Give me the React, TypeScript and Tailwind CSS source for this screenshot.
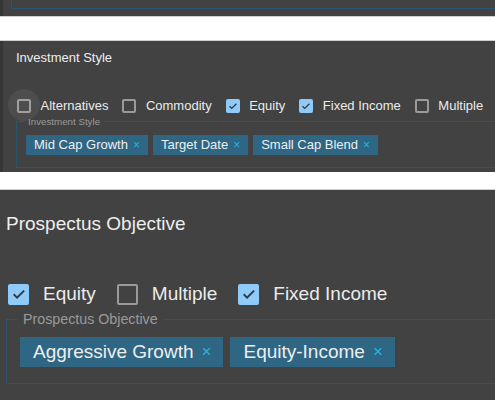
import React from "react";

const font = { fontFamily: "'Liberation Sans', Arial, sans-serif" };

function Check({ checked, size }: { checked: boolean; size: number }) {
  if (checked) {
    return (
      <span
        className="flex shrink-0 items-center justify-center rounded-[2px] bg-[#90caf9]"
        style={{ width: size, height: size }}
      >
        <svg viewBox="0 0 24 24" width={size * 0.85} height={size * 0.85}>
          <path d="M5 12.5l4.5 4.5L19 7.5" fill="none" stroke="#2f3a44" strokeWidth="2.6" />
        </svg>
      </span>
    );
  }
  return (
    <span
      className="block shrink-0 box-border rounded-[2px] border-2 border-[#9a9a9a]"
      style={{ width: size, height: size }}
    />
  );
}

function Chip({ label, big }: { label: string; big?: boolean }) {
  return (
    <span
      className={
        big
          ? "flex h-[30px] shrink-0 items-center gap-[8px] whitespace-nowrap bg-[#2f6684] pl-[13px] pr-[12px] text-[19px] text-[#eeeeee]"
          : "flex h-[20px] shrink-0 items-center gap-[5px] whitespace-nowrap bg-[#2f6684] pl-[8px] pr-[8px] text-[13px] text-[#eeeeee]"
      }
    >
      {label}
      <span className={big ? "text-[17px] text-[#2bb3d6]" : "text-[12px] text-[#2bb3d6]"}>×</span>
    </span>
  );
}

export default function App() {
  const small = [
    { l: "Alternatives", c: false, ripple: true },
    { l: "Commodity", c: false },
    { l: "Equity", c: true },
    { l: "Fixed Income", c: true },
    { l: "Multiple", c: false },
  ];
  const big = [
    { l: "Equity", c: true },
    { l: "Multiple", c: false },
    { l: "Fixed Income", c: true },
  ];
  return (
    <div className="h-[400px] w-[495px] overflow-hidden bg-white" style={font}>
      {/* section 1 tail */}
      <div className="flex h-[17px] border-b border-[#cfcfcf] bg-[#424242]">
        <div className="w-[3px] shrink-0 bg-[#363636]" />
        <div className="ml-[8px] h-[9px] flex-1 border-b border-l border-[#2b5670]" />
      </div>
      <div className="h-[24px] border-b border-[#cfcfcf]" />
      {/* section 2 */}
      <div className="flex h-[131px] bg-[#424242]">
        <div className="w-[3px] shrink-0 bg-[#363636]" />
        <div className="flex min-w-0 flex-1 flex-col pl-[13px]">
          <div className="mt-[9px] h-[16px] text-[13px] leading-[16px] text-[#eeeeee]">Investment Style</div>
          <div className="mt-[32px] flex h-[16px] items-center whitespace-nowrap pl-[1px]">
            {small.map((s, i) => (
              <div key={i} className="relative mr-[14px] flex shrink-0 items-center">
                {s.ripple && (
                  <span className="absolute left-[-9px] top-[-9px] h-[32px] w-[32px] rounded-full bg-[#ffffff10]" />
                )}
                <Check checked={s.c} size={14} />
                <span className="ml-[9.5px] text-[13px] leading-[16px] text-[#ebebeb]">{s.l}</span>
              </div>
            ))}
          </div>
          <fieldset className="mt-[2px] h-[52px] border border-r-0 border-[#2b5670] p-0">
            <legend className="ml-[7px] px-[4px] text-[9.75px] leading-[11px] text-[#9a9a9a]">Investment Style</legend>
            <div className="mt-[8px] flex gap-[5px] pl-[9px]">
              <Chip label="Mid Cap Growth" />
              <Chip label="Target Date" />
              <Chip label="Small Cap Blend" />
            </div>
          </fieldset>
        </div>
      </div>
      <div className="h-[18px] border-b border-[#cfcfcf]" />
      {/* section 3 */}
      <div className="flex h-[210px] flex-col bg-[#424242] pl-[6px]">
        <div className="mt-[22px] h-[24px] text-[19px] leading-[24px] text-[#eeeeee]">Prospectus Objective</div>
        <div className="mt-[47px] flex h-[22px] items-center whitespace-nowrap pl-[2px]">
          {big.map((s, i) => (
            <div key={i} className="mr-[21px] flex shrink-0 items-center">
              <Check checked={s.c} size={21} />
              <span className="ml-[14px] text-[19px] leading-[22px] text-[#ebebeb]">{s.l}</span>
            </div>
          ))}
        </div>
        <fieldset className="mt-[6px] h-[73px] border border-r-0 border-[#2b5670] p-0">
          <legend className="ml-[11px] px-[5px] text-[14.25px] leading-[16px] text-[#9a9a9a]">Prospectus Objective</legend>
          <div className="mt-[10px] flex gap-[7px] pl-[13px]">
            <Chip big label="Aggressive Growth" />
            <Chip big label="Equity-Income" />
          </div>
        </fieldset>
      </div>
    </div>
  );
}
